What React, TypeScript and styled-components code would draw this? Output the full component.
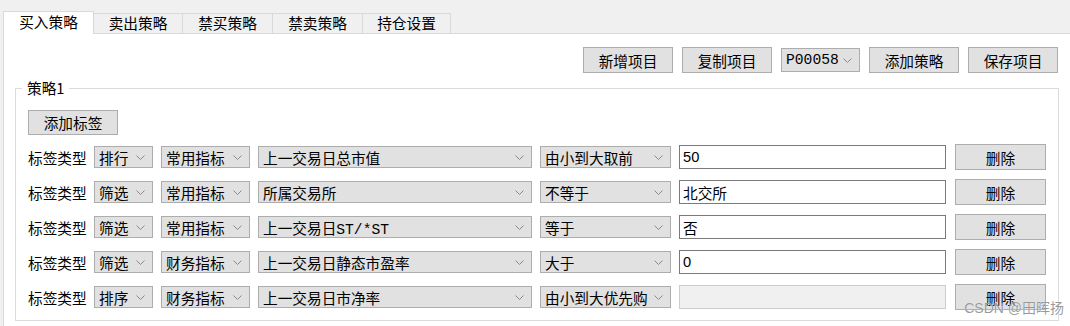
import React from 'react';
import styled, { createGlobalStyle } from 'styled-components';

const GlobalStyle = createGlobalStyle`
  body {
    margin: 0;
    background: #f0f0f0;
    font-family: "Noto Sans CJK SC", sans-serif;
    font-size: 11pt;
    color: #000;
  }
`

const Page = styled.div`
  position: relative;
  width: 1070px;
  height: 326px;
  padding: 11px 0 0 3px;
  box-sizing: border-box;
  overflow: hidden;
  display: flex;
  flex-direction: column;
`

const TabBar = styled.div`
  display: flex;
  align-items: flex-end;
  height: 22px;
`

const Tab = styled.div<{ $active?: boolean; $w: number }>`
  width: ${p => p.$w}px;
  height: ${p => (p.$active ? 23 : 20)}px;
  margin-left: -1px;
  margin-bottom: ${p => (p.$active ? -1 : 0)}px;
  &:first-child { margin-left: 0; }
  box-sizing: border-box;
  border: 1px solid #d9d9d9;
  border-bottom: none;
  background: ${p => (p.$active ? '#fff' : '#f0f0f0')};
  position: relative;
  z-index: ${p => (p.$active ? 1 : 0)};
  display: flex;
  align-items: center;
  justify-content: center;
  padding-bottom: ${p => (p.$active ? 2 : 0)}px;
  line-height: 1;
`

const Pane = styled.div`
  flex: 1;
  background: #fff;
  border-top: 1px solid #d9d9d9;
  border-left: 1px solid #d9d9d9;
  padding: 0 0 0 11px;
`

const Content = styled.div`
  width: 1044px;
`

const Toolbar = styled.div`
  display: flex;
  justify-content: flex-end;
  align-items: center;
  gap: 9px;
  margin-top: 13px;
  padding-right: 1px;
`

const Button = styled.button<{ $w?: number }>`
  width: ${p => p.$w ?? 90}px;
  height: 26px;
  box-sizing: border-box;
  border: 1px solid #adadad;
  background: #e1e1e1;
  font-family: "Noto Sans CJK SC", sans-serif;
  font-size: 11pt;
  color: #000;
  padding: 0;
  display: flex;
  align-items: center;
  justify-content: center;
  flex-shrink: 0;
`

const Combo = styled.div<{ $w: number; $h?: number }>`
  width: ${p => p.$w}px;
  height: ${p => p.$h ?? 22}px;
  box-sizing: border-box;
  border: 1px solid #adadad;
  background: #e1e1e1;
  display: flex;
  align-items: center;
  justify-content: space-between;
  padding: 0 7px 0 4px;
  white-space: nowrap;
  flex-shrink: 0;
  font-family: "Liberation Mono", "Noto Sans CJK SC", monospace;
  font-size: 11pt;
`

const Group = styled.fieldset`
  margin: 5px 0 0 0;
  padding: 12px 11px 10px 12px;
  border: 1px solid #dcdcdc;
  box-sizing: border-box;
  width: 1044px;
`

const Legend = styled.legend`
  padding: 0 5px;
  margin-left: -6px;
  line-height: 20px;
`

const Rows = styled.div`
  display: flex;
  flex-direction: column;
  gap: 9px;
  margin-top: 9px;
`

const Row = styled.div`
  display: flex;
  align-items: center;
  height: 26px;
`

const Label = styled.span`
  width: 60px;
  margin-right: 6px;
  white-space: nowrap;
`

const Gap = styled.span<{ $w: number }>`
  width: ${p => p.$w}px;
  flex-shrink: 0;
`

const Field = styled.input`
  width: 267px;
  height: 24px;
  box-sizing: border-box;
  border: 1px solid #7a7a7a;
  background: #fff;
  padding: 0 3px;
  font-family: "Liberation Sans", "Noto Sans CJK SC", sans-serif;
  font-size: 11pt;
  color: #000;
  outline: none;
  &:disabled {
    background: #f0f0f0;
    border-color: #cccccc;
  }
`

const Watermark = styled.div`
  position: absolute;
  right: 6px;
  top: 297px;
  font-family: "Liberation Sans", "Noto Sans CJK SC", sans-serif;
  font-size: 14px;
  color: rgba(120, 120, 120, 0.75);
  text-shadow: 0 0 1px #fff;
  pointer-events: none;
`

const Chevron = () => (
  <svg width="9" height="5" viewBox="0 0 9 5">
    <polyline points="0.5,0.5 4.5,4.5 8.5,0.5" fill="none" stroke="#8a8a8a" strokeWidth="1" />
  </svg>
)

const tabs = [
  { name: '买入策略', w: 91 },
  { name: '卖出策略', w: 90 },
  { name: '禁买策略', w: 91 },
  { name: '禁卖策略', w: 91 },
  { name: '持仓设置', w: 89 },
]

const rows = [
  { a: '排行', b: '常用指标', c: '上一交易日总市值', d: '由小到大取前', v: '50' },
  { a: '筛选', b: '常用指标', c: '所属交易所', d: '不等于', v: '北交所' },
  { a: '筛选', b: '常用指标', c: '上一交易日ST/*ST', d: '等于', v: '否' },
  { a: '筛选', b: '财务指标', c: '上一交易日静态市盈率', d: '大于', v: '0' },
  { a: '排序', b: '财务指标', c: '上一交易日市净率', d: '由小到大优先购', v: '', disabled: true },
]

export default function App() {
  return (
    <Page>
      <GlobalStyle />
      <TabBar>
        {tabs.map((t, i) => (
          <Tab key={t.name} $w={t.w} $active={i === 0}>{t.name}</Tab>
        ))}
      </TabBar>
      <Pane>
        <Content>
          <Toolbar>
            <Button>新增项目</Button>
            <Button>复制项目</Button>
            <Combo $w={79} $h={24}>P00058 <Chevron /></Combo>
            <Button>添加策略</Button>
            <Button>保存项目</Button>
          </Toolbar>
          <Group>
            <Legend>策略1</Legend>
            <Button $w={90} style={{ height: 25 }}>添加标签</Button>
            <Rows>
              {rows.map((r, i) => (
                <Row key={i}>
                  <Label>标签类型</Label>
                  <Combo $w={59}>{r.a}<Chevron /></Combo>
                  <Gap $w={8} />
                  <Combo $w={89}>{r.b}<Chevron /></Combo>
                  <Gap $w={8} />
                  <Combo $w={274}>{r.c}<Chevron /></Combo>
                  <Gap $w={8} />
                  <Combo $w={131}>{r.d}<Chevron /></Combo>
                  <Gap $w={8} />
                  <Field value={r.v} disabled={r.disabled} readOnly />
                  <Gap $w={9} />
                  <Button $w={91}>删除</Button>
                </Row>
              ))}
            </Rows>
          </Group>
        </Content>
      </Pane>
      <Watermark>CSDN @田晖扬</Watermark>
    </Page>
  );
}
